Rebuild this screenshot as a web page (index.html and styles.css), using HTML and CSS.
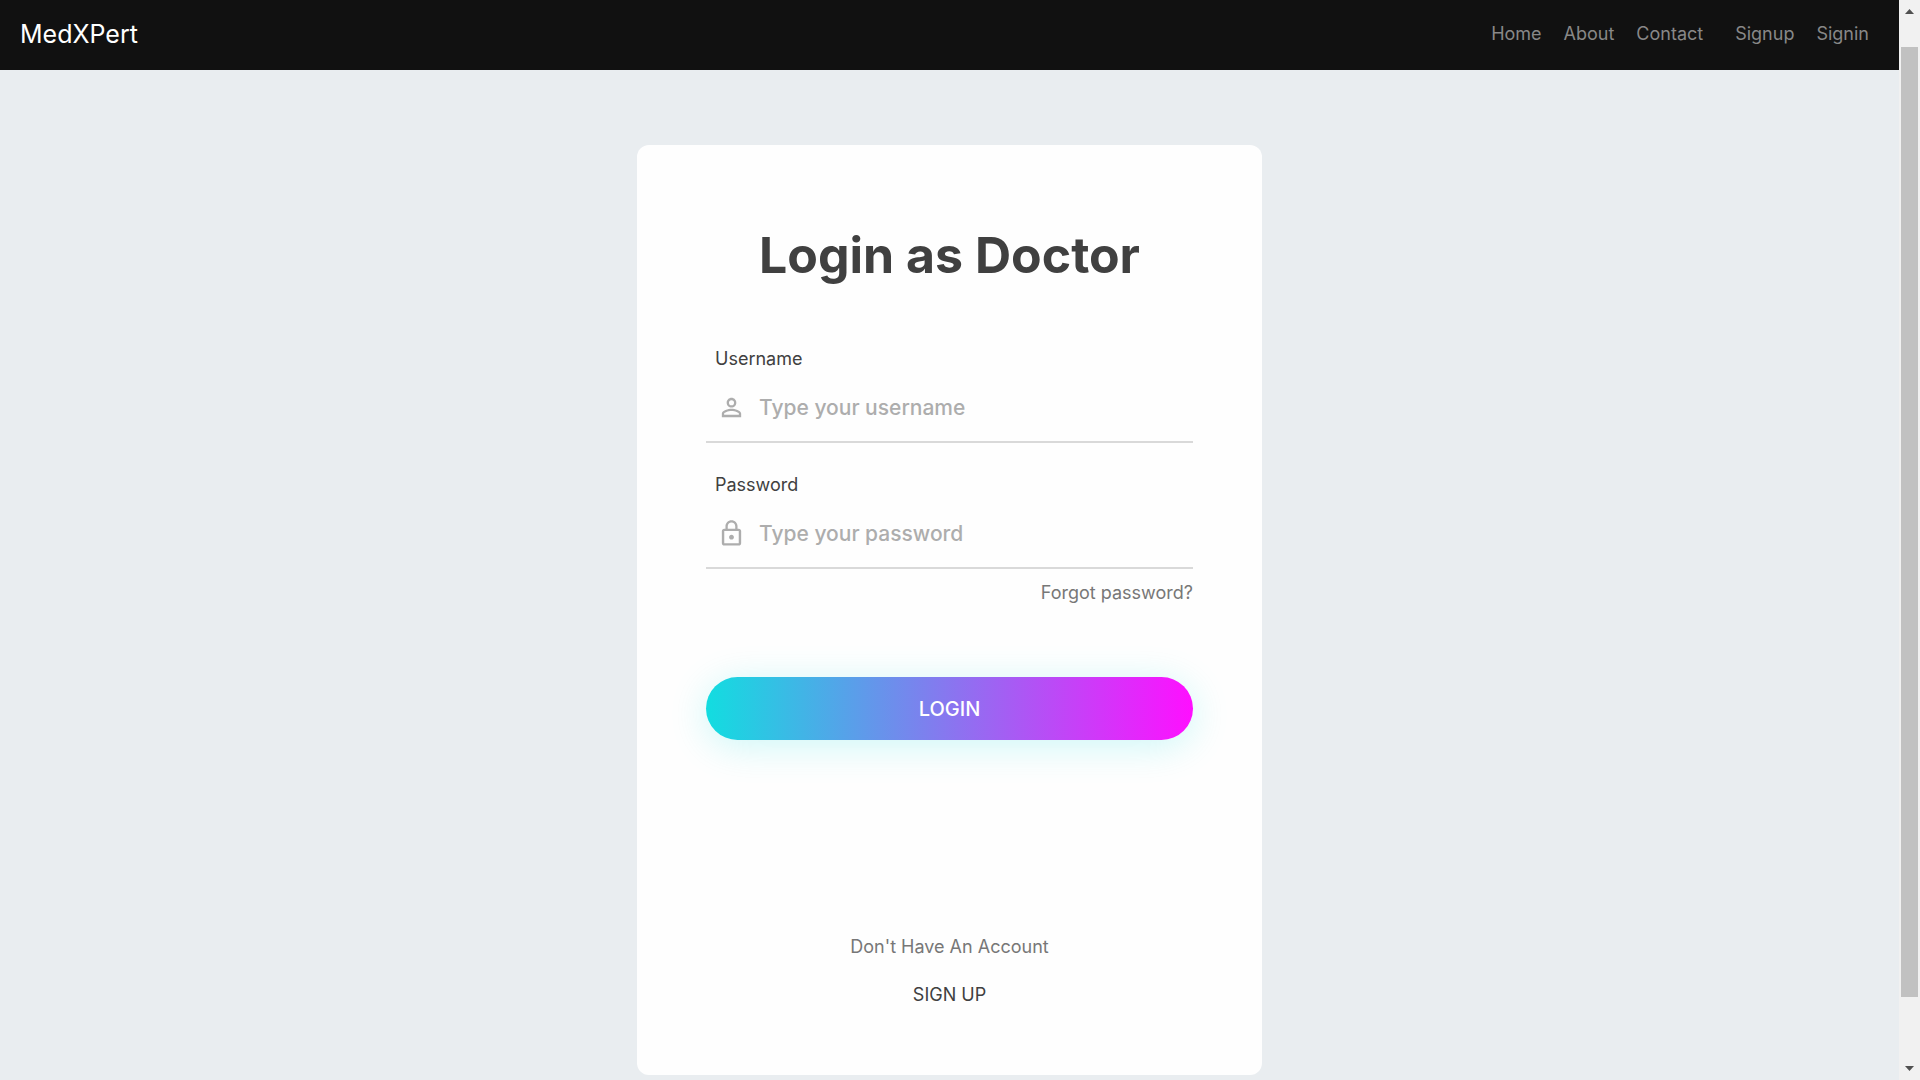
FILE: index.html
```html
<!DOCTYPE html>
<html lang="en">
<head>
<meta charset="utf-8">
<title>MedXPert</title>
<link rel="stylesheet" href="styles.css">
</head>
<body>
<div class="page">
  <header class="navbar">
    <a class="brand" href="#">MedXPert</a>
    <nav class="menu">
      <ul class="links">
        <li><a href="#">Home</a></li>
        <li><a href="#">About</a></li>
        <li><a href="#">Contact</a></li>
      </ul>
      <ul class="links">
        <li><a href="#">Signup</a></li>
        <li><a href="#">Signin</a></li>
      </ul>
    </nav>
  </header>
  <main class="content">
    <form class="card">
      <h1 class="title">Login as Doctor</h1>
      <div class="field">
        <label class="label" for="username">Username</label>
        <div class="control">
          <svg class="icon" viewBox="0 0 24 24" aria-hidden="true"><path d="M12 5.9a2.1 2.1 0 1 1 0 4.2 2.1 2.1 0 0 1 0-4.2m0 9c2.97 0 6.1 1.46 6.1 2.1v1.1H5.9V17c0-.64 3.13-2.1 6.1-2.1M12 4C9.79 4 8 5.79 8 8s1.79 4 4 4 4-1.79 4-4-1.79-4-4-4zm0 9c-2.67 0-8 1.34-8 4v3h16v-3c0-2.66-5.33-4-8-4z"/></svg>
          <input class="input" id="username" type="text" placeholder="Type your username">
        </div>
      </div>
      <div class="field">
        <label class="label" for="password">Password</label>
        <div class="control">
          <svg class="icon" viewBox="0 0 24 24" aria-hidden="true"><path d="M12 17c1.1 0 2-.9 2-2s-.9-2-2-2-2 .9-2 2 .9 2 2 2zm6-9h-1V6c0-2.76-2.24-5-5-5S7 3.24 7 6v2H6c-1.1 0-2 .9-2 2v10c0 1.1.9 2 2 2h12c1.1 0 2-.9 2-2V10c0-1.1-.9-2-2-2zM8.9 6c0-1.71 1.39-3.1 3.1-3.1s3.1 1.39 3.1 3.1v2H8.9V6zM18 20H6V10h12v10z"/></svg>
          <input class="input" id="password" type="password" placeholder="Type your password">
        </div>
      </div>
      <a class="forgot" href="#">Forgot password?</a>
      <button class="submit" type="button">LOGIN</button>
      <div class="register">
        <span class="hint">Don't Have An Account</span>
        <a class="signup" href="#">SIGN UP</a>
      </div>
    </form>
  </main>
</div>
<div class="scrollbar" aria-hidden="true">
  <svg class="arrow" viewBox="0 0 9 5"><path d="M0 5 4.500 0 9 5z"/></svg>
  <div class="thumb"></div>
  <svg class="arrow" viewBox="0 0 9 5"><path d="M0 0h9L4.500 5z"/></svg>
</div>
</body>
</html>
```
FILE: styles.css
```css
* {
  box-sizing: border-box;
}

body {
  margin: 0;
  display: flex;
  min-height: 100vh;
  background: #e9edf0;
  color: #404040;
  font-family: Inter, "Open Sans", sans-serif;
  font-size: 18px;
  line-height: 28px;
}

a {
  color: inherit;
  text-decoration: none;
}

.page {
  flex: 1;
}

.navbar {
  display: flex;
  align-items: center;
  justify-content: space-between;
  min-height: 70px;
  padding: 0 30px 2px 20px;
  background: #111;
}

.brand {
  color: #fff;
  font-size: 25px;
}

.menu {
  display: flex;
  gap: 32px;
  color: #888;
}

.links {
  display: flex;
  gap: 22px;
  margin: 0;
  padding: 0;
  list-style: none;
}

.content {
  padding: 75px 20px 5px;
}

.card {
  display: flex;
  flex-direction: column;
  max-width: 625px;
  margin: 0 auto;
  padding: 80px 69px 66px;
  border-radius: 12px;
  background: #fefefe;
}

.title {
  margin: 0 0 60px;
  font-size: 50px;
  line-height: 60px;
  font-weight: 700;
  text-align: center;
}

.field {
  margin-bottom: 28px;
  border-bottom: 2px solid #d9d9d9;
}

.label {
  display: block;
  padding-left: 9px;
}

.control {
  display: flex;
  align-items: center;
  gap: 13px;
  padding-left: 11px;
}

.icon {
  width: 29px;
  height: 29px;
  fill: #adadad;
}

.input {
  flex: 1;
  min-width: 0;
  height: 68px;
  padding: 0;
  border: 0;
  outline: 0;
  background: transparent;
  color: #333;
  font: inherit;
  font-size: 21px;
  font-weight: 500;
}

.input::placeholder {
  color: #adadad;
}

.forgot {
  align-self: flex-end;
  margin-top: -18px;
  color: #777;
}

.submit {
  height: 63px;
  margin-top: 70px;
  border: 0;
  border-radius: 32px;
  background: linear-gradient(to right, #12dde0, #ff0fff);
  box-shadow: 0 6px 38px rgba(0, 220, 220, 0.2);
  color: #fff;
  font: inherit;
  font-size: 20px;
  font-weight: 500;
}

.register {
  display: flex;
  flex-direction: column;
  align-items: center;
  gap: 20px;
  margin-top: 193px;
}

.hint {
  color: #777;
}

.scrollbar {
  display: flex;
  flex-direction: column;
  align-items: center;
  width: 21px;
  padding: 9px 0;
  background: #f1f1f1;
}

.arrow {
  width: 9px;
  height: 5px;
  fill: #505050;
}

.thumb {
  flex: 1;
  width: 17px;
  margin: 33px 0 69px;
  background: #c1c1c1;
}
```
